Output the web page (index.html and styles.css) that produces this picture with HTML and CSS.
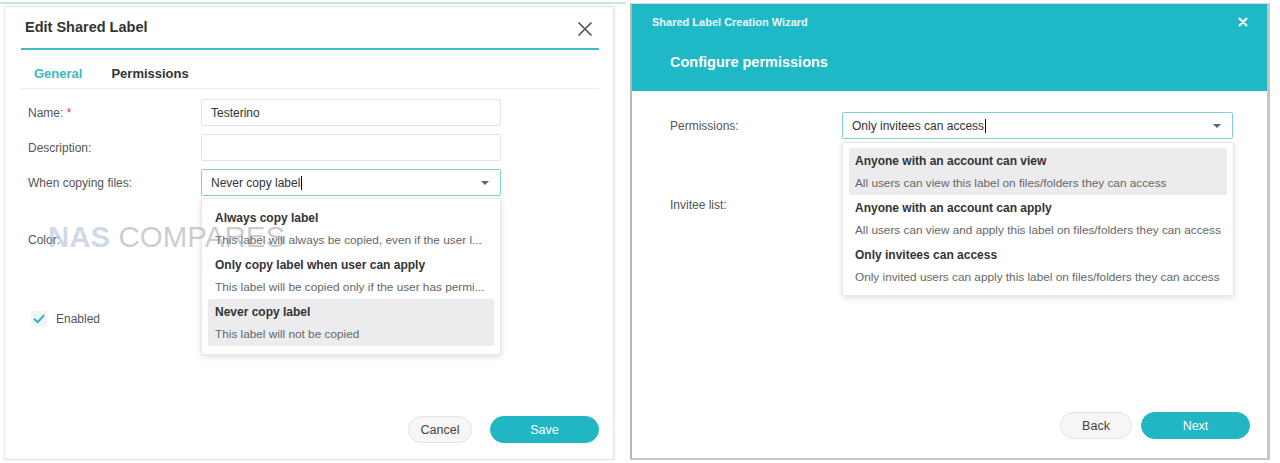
FILE: index.html
```html
<!DOCTYPE html>
<html lang="en">
<head>
<meta charset="utf-8">
<title>Shared Label</title>
<link rel="stylesheet" href="styles.css">
</head>
<body>
<div class="canvas">
  <section class="left">
    <div class="dlg">
      <header class="dlg-head">
        <h1 class="dlg-title">Edit Shared Label</h1>
        <span class="close-x" aria-label="Close">
          <svg width="16" height="16" viewBox="0 0 16 16"><path d="M2 2 L14 14 M14 2 L2 14" stroke="#555" stroke-width="1.7" fill="none" stroke-linecap="round"/></svg>
        </span>
      </header>
      <nav class="tabs">
        <span class="tab tab-active">General</span>
        <span class="tab">Permissions</span>
      </nav>
      <div class="form">
        <div class="row">
          <span class="lbl">Name: <span class="req">*</span></span>
          <div class="input">Testerino</div>
        </div>
        <div class="row">
          <span class="lbl">Description:</span>
          <div class="input"></div>
        </div>
        <div class="row">
          <span class="lbl">When copying files:</span>
          <div class="select-wrap">
            <div class="input select">Never copy label<span class="caret"></span><span class="arrow"></span></div>
            <ul class="menu menu-left">
              <li class="item"><span class="it-title">Always copy label</span><span class="it-desc">This label will always be copied, even if the user l...</span></li>
              <li class="item"><span class="it-title">Only copy label when user can apply</span><span class="it-desc">This label will be copied only if the user has permi...</span></li>
              <li class="item item-sel"><span class="it-title">Never copy label</span><span class="it-desc">This label will not be copied</span></li>
            </ul>
          </div>
        </div>
        <div class="row row-color">
          <span class="lbl">Color:</span>
        </div>
        <div class="row row-enabled">
          <span class="check">
            <svg width="16" height="16" viewBox="0 0 16 16"><rect x="0" y="0" width="16" height="16" rx="2" fill="#f1f3f4"/><path d="M3.5 8.2 L6.8 11.2 L12.6 4.6" stroke="#26b3bf" stroke-width="2" fill="none" stroke-linecap="round" stroke-linejoin="round"/></svg>
          </span>
          <span class="lbl-check">Enabled</span>
        </div>
      </div>
      <footer class="dlg-foot">
        <button class="btn btn-ghost btn-cancel">Cancel</button>
        <button class="btn btn-primary">Save</button>
      </footer>
    </div>
    <div class="watermark"><span class="wm-nas">NAS</span> <span class="wm-comp">COMPARES</span></div>
  </section>

  <section class="right">
    <header class="wiz-head">
      <div class="wiz-top">
        <span class="wiz-small">Shared Label Creation Wizard</span>
        <span class="wiz-x" aria-label="Close">
          <svg width="10" height="10" viewBox="0 0 10 10"><path d="M1.5 1.5 L8.5 8.5 M8.5 1.5 L1.5 8.5" stroke="#fff" stroke-width="2" fill="none" stroke-linecap="round"/></svg>
        </span>
      </div>
      <h2 class="wiz-title">Configure permissions</h2>
    </header>
    <div class="wiz-body">
      <div class="wrow">
        <span class="lbl">Permissions:</span>
        <div class="select-wrap">
          <div class="input select">Only invitees can access<span class="caret"></span><span class="arrow"></span></div>
          <ul class="menu menu-right">
            <li class="item item-sel"><span class="it-title">Anyone with an account can view</span><span class="it-desc">All users can view this label on files/folders they can access</span></li>
            <li class="item"><span class="it-title">Anyone with an account can apply</span><span class="it-desc">All users can view and apply this label on files/folders they can access</span></li>
            <li class="item"><span class="it-title">Only invitees can access</span><span class="it-desc">Only invited users can apply this label on files/folders they can access</span></li>
          </ul>
        </div>
      </div>
      <div class="wrow wrow-invitee">
        <span class="lbl">Invitee list:</span>
      </div>
    </div>
    <footer class="wiz-foot">
      <button class="btn btn-ghost btn-back">Back</button>
      <button class="btn btn-primary">Next</button>
    </footer>
  </section>
</div>
</body>
</html>
```

FILE: styles.css
```css
* { box-sizing: border-box; }

html, body {
  margin: 0;
  padding: 0;
  background: #ffffff;
  font-family: "Liberation Sans", Arial, Helvetica, sans-serif;
  color: #444;
}

.canvas {
  display: flex;
  width: 1280px;
  height: 463px;
  overflow: hidden;
}

/* ---------- left screenshot ---------- */
.left {
  position: relative;
  width: 626px;
  margin-top: 2px;
  border-top: 2px solid #c6e7ea;
  padding: 2px 12px 0 4px;
}

.dlg {
  height: 454px;
  border: 1px solid #e4e4e4;
  box-shadow: 1px 0 3px rgba(0,0,0,0.08);
  background: #fff;
  display: flex;
  flex-direction: column;
  padding: 0 14px 16px 16px;
}

.dlg-head {
  height: 43px;
  border-bottom: 2px solid #3dbcc5;
  display: flex;
  align-items: center;
  justify-content: space-between;
  padding: 0 0 0 4px;
}

.dlg-title {
  margin: 0;
  font-size: 14.5px;
  font-weight: bold;
  color: #333;
  line-height: 20px;
  padding-bottom: 1px;
}

.close-x {
  display: flex;
  margin-right: 6px;
  margin-top: 2px;
}

.tabs {
  height: 39px;
  border-bottom: 1px solid #ebebeb;
  display: flex;
  align-items: center;
  gap: 29px;
  padding-left: 13px;
  padding-top: 8px;
}

.tab {
  font-size: 13px;
  font-weight: bold;
  color: #333;
}

.tab-active { color: #3cb9c2; }

.form {
  display: flex;
  flex-direction: column;
  padding: 10px 0 0 7px;
}

.row {
  display: grid;
  grid-template-columns: 173px 300px;
  align-items: center;
  height: 27px;
  margin-bottom: 8px;
}

.row-color { margin-top: 22px; }
.row-enabled {
  display: flex;
  margin-top: 44px;
  padding-left: 2px;
}

.lbl {
  font-size: 12px;
  color: #555;
}

.req { color: #e0303a; }

.input {
  height: 27px;
  border: 1px solid #e2e2e2;
  border-radius: 2px;
  font-size: 12px;
  color: #333;
  padding: 0 9px;
  display: flex;
  align-items: center;
  background: #fff;
}

.select {
  border-color: #7fd3d8;
  position: relative;
}

.caret {
  display: inline-block;
  width: 1px;
  height: 14px;
  background: #111;
  margin-left: 1px;
}

.arrow {
  position: absolute;
  right: 11px;
  top: 11px;
  width: 0;
  height: 0;
  border-left: 4px solid transparent;
  border-right: 4px solid transparent;
  border-top: 4px solid #4e6b73;
}

.select-wrap { position: relative; }

.menu {
  position: absolute;
  left: 0;
  top: 29px;
  margin: 0;
  list-style: none;
  background: #fff;
  border: 1px solid #e8e8e8;
  border-radius: 2px;
  box-shadow: 0 2px 6px rgba(0,0,0,0.13);
  z-index: 5;
}

.menu-left {
  width: 300px;
  padding: 6px 6px 8px 6px;
}

.menu-right {
  width: 392px;
  top: 30px;
  padding: 5px 6px 6px 6px;
}

.item {
  height: 47px;
  padding: 4px 7px 0;
  display: flex;
  flex-direction: column;
  border-radius: 2px;
}

.menu-right .item { padding-left: 6px; }

.item-sel { background: #ececee; }

.it-title {
  font-size: 12px;
  font-weight: bold;
  color: #333;
  line-height: 18px;
}

.it-desc {
  font-size: 11.8px;
  color: #666;
  line-height: 18px;
  margin-top: 4px;
  white-space: nowrap;
}

.check { display: flex; margin-right: 9px; margin-left: 1px; }

.lbl-check {
  font-size: 12px;
  color: #555;
}

.dlg-foot {
  margin-top: auto;
  display: flex;
  justify-content: flex-end;
  gap: 18px;
}

.btn {
  font-family: inherit;
  font-size: 12.5px;
  height: 27px;
  border-radius: 14px;
  cursor: pointer;
  padding: 0;
}

.btn-ghost {
  background: #f6f6f6;
  border: 1px solid #e2e2e2;
  color: #444;
}

.btn-primary {
  width: 109px;
  background: #20b6c4;
  border: 1px solid #20b6c4;
  color: #fff;
}

.btn-cancel { width: 64px; }
.btn-back { width: 72px; }

.watermark {
  position: absolute;
  left: 48px;
  top: 213px;
  font-size: 29.5px;
  line-height: 40px;
  white-space: nowrap;
  pointer-events: none;
  z-index: 10;
}

.wm-nas { color: rgba(150,170,205,0.45); font-weight: bold; }
.wm-comp { color: rgba(120,120,120,0.38); }

/* ---------- right screenshot ---------- */
.right {
  width: 640px;
  height: 457px;
  margin-top: 3px;
  margin-left: 4px;
  border-top: 1px solid #dcdcdc;
  border-left: 2px solid #b8b8b8;
  border-right: 3px solid #c6c6c6;
  border-bottom: 2px solid #c9c9c9;
  background: #fff;
  display: flex;
  flex-direction: column;
}

.wiz-head {
  height: 87px;
  background: #1fb8c6;
  color: #fff;
}

.wiz-top {
  display: flex;
  justify-content: space-between;
  align-items: center;
  height: 22px;
  margin-top: 7px;
  padding: 0 19px 0 20px;
}

.wiz-small {
  font-size: 11px;
  font-weight: bold;
  color: #e9f8fa;
}

.wiz-x { display: flex; }

.wiz-title {
  margin: 18px 0 0 38px;
  font-size: 14.5px;
  font-weight: bold;
  line-height: 22px;
}

.wiz-body {
  padding: 21px 0 0 38px;
}

.wrow {
  display: grid;
  grid-template-columns: 172px 391px;
  align-items: center;
  height: 27px;
}

.wrow-invitee {
  margin-top: 52px;
}

.wiz-foot {
  margin-top: auto;
  display: flex;
  justify-content: flex-end;
  gap: 9px;
  padding: 0 17px 19px 0;
}
```
